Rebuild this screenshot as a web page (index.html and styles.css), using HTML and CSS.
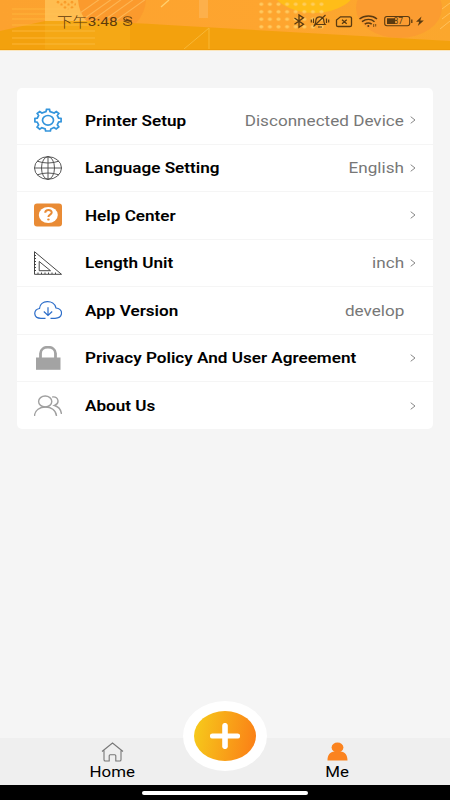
FILE: index.html
```
<!DOCTYPE html>
<html lang="en">
<head>
  <meta charset="UTF-8" />
  <meta name="viewport" content="width=device-width, initial-scale=1.0"/>
  <title>Me</title>
  <link rel="stylesheet" href="styles.css">
</head>
<body>
  <div class="app">
    <header class="header">
      <svg class="header-bg" width="450" height="51" viewBox="0 0 450 51">
        <defs>
          <linearGradient id="sky" x1="0" x2="1">
            <stop offset="0" stop-color="#fca22f"/>
            <stop offset="0.6" stop-color="#fea52f"/>
            <stop offset="1" stop-color="#fba72d"/>
          </linearGradient>
          <pattern id="dots" width="8.6" height="7.5" patternUnits="userSpaceOnUse" x="257" y="0.5">
            <ellipse cx="4.3" cy="3.8" rx="2.1" ry="1.6" fill="#ffd069"/>
          </pattern>
          <pattern id="smallDots" width="7" height="5.5" patternUnits="userSpaceOnUse">
            <circle cx="2" cy="2" r="1.4" fill="#f99a28"/>
            <circle cx="5.5" cy="4.5" r="1.2" fill="#f99a28"/>
          </pattern>
          <clipPath id="leftBall"><circle cx="112" cy="-2" r="35"/></clipPath>
        </defs>
        <rect width="450" height="51" fill="url(#sky)"/>
        <rect x="45" width="45" height="25" fill="#ffbd50"/>
        <path d="M53 0h24l-2 8-10 2z" fill="url(#smallDots)"/>
        <ellipse cx="112" cy="-2" rx="34" ry="35" fill="#fb9a2d"/>
        <g clip-path="url(#leftBall)" stroke="#fdb552" stroke-width="1.1">
          <path d="M80 13L100-1M85 18L112-1M90 22L122-1M96 26L134-1M104 29L146-1"/>
        </g>
        <path d="M161 7l8-7" stroke="#ffd06e" stroke-width="1.3"/>
        <rect x="199" width="9" height="18" fill="#fdb04b"/>
        <ellipse cx="314" cy="-14" rx="43" ry="27" fill="#ffbd18"/>
        <ellipse cx="399" cy="8" rx="43" ry="30" fill="#fb9c31"/>
        <rect x="257" y="1" width="69" height="28" fill="url(#dots)" opacity="0.85"/>
        <path d="M442 9l8-6M442 19l8-6M440 29l10-8" stroke="#ffc15c"/>
        <path d="M0 31L45 21H90C120 22 150 24 185 26L450 41V51H0z" fill="#f3a10d"/>
        <rect x="45" y="21" width="85" height="29" fill="#f7ad1b" opacity="0.6"/>
        <path d="M12 9h33M12 14h33M12 19h33M12 25h33M12 31h33M12 38h33M12 44h33" stroke="#ffb83c" stroke-width="1.6" opacity="0.6"/>
        <path d="M45 9h32M45 14h34M45 19h37M45 25h50M45 31h50M45 38h50M45 44h50" stroke="#ffc85b" stroke-width="1.4" opacity="0.35"/>
        <path d="M184 49l25-21v22" fill="none" stroke="#f8b837"/>
        <rect y="49" width="450" height="1" fill="#ed9a09"/>
        <rect y="50" width="450" height="1" fill="#fbe6bd"/>
      </svg>
      <div class="status">
        <div class="clock"><span class="cjk">下午</span><span>3:48</span>
          <svg width="10" height="12" viewBox="0 0 10 12" fill="none" stroke="#6b430f" stroke-width="1.1"><path d="M8.800 3.300C8 .4 1.300.4 1.200 3.400c0 3 7.600 1.800 7.600 4.900 0 3.600-7.300 3.400-7.800 0M3.200 3.800l5.600 2.400M1 6l5.800 2.400"/></svg>
        </div>
        <svg width="134" height="18" viewBox="292 12 134 18" fill="none" stroke="#5a3a10" stroke-width="1.3">
          <path d="M294.500 18l9 6.300-4.500 2.900V15l4.500 2.900-9 6.400"/>
          <path d="M314.800 24.500c1.200-1.500.8-3 1.200-5 .8-3.500 6.500-3.500 7.600 0 .5 2 0 3.500 1.500 5zM318 27h4M325.500 15l-12 11.500M313.500 18.500v4.500M326.500 18.500v4.500M311.300 19.500v3M328.700 19.500v3" stroke-width="1.200"/>
          <path d="M340.500 16.800h9.500q1.500 0 1.500 1.300v7.200q0 1.200-1.500 1.200h-12q-1.500 0-1.500-1.200V20zM342 19.700l4.700 4M346.700 19.700l-4.700 4"/>
          <path d="M359.500 19c5-4 13-4 17.500 0M362 21.700c4-3 9-3 12.500 0M364.700 24.200c2.300-1.600 5-1.600 7 0" stroke-width="1.500"/>
          <circle cx="368.300" cy="26" r="1" fill="#5a3a10" stroke="none"/>
          <path d="M373.700 24v3M375.700 24v2.500" stroke-width=".8"/>
          <rect x="384.700" y="16.500" width="25" height="9.300" rx="2.200" stroke-width="1.100"/>
          <rect x="387" y="18.300" width="8" height="5.700" fill="#5a3a10" stroke="none"/>
          <path d="M411.800 19.500v3.500"/>
          <path d="M421.500 16.500l-5.500 5.200h3.200l-1.400 4.300 6-5.500h-3.500z" fill="#5a3a10" stroke="none"/>
          <text class="battery" x="393.500" y="24">87</text>
        </svg>
      </div>
    </header>

    <main class="content">
      <ul class="card">
        <li class="row">
          <svg class="icon" viewBox="0 0 28 24" fill="none" stroke="#3495dc" stroke-width="1.700">
            <path d="M12 3.500L12.500 1.300h3L16 3.500l4.200 1.500L22.300 3.500 24.800 5.500 23.300 7.500l1.300 2.600 2.500.3v3.300l-2.500.3-1.300 2.800 1.500 2-2.600 2.100-2.200-1.400L16.800 21l-.4 2h-4.800L11.200 21l-3.400-1.300-2.100 1.400-2.600-2.100 1.500-2L3.300 14.200l-2.400-.4v-3.400l2.400-.3L4.600 7.500 3.200 5.500l2.500-2L7.900 5z"/>
            <ellipse cx="14" cy="12.300" rx="5.500" ry="4.800"/>
          </svg>
          <span class="label">Printer Setup</span>
          <span class="value">Disconnected Device</span>
          <svg class="arrow" viewBox="0 0 6 8"><path d="M.7.700L5 4 .7 7.300"/></svg>
        </li>
        <li class="row">
          <svg class="icon" viewBox="0 0 28 24" fill="none" stroke="#454545" stroke-width=".9">
            <ellipse cx="14" cy="12" rx="13.500" ry="11.300"/>
            <ellipse cx="14" cy="12" rx="6.500" ry="11.300"/>
            <path d="M14 .5v23M.5 12h27M3.200 5.200q10.800 3.600 21.600 0M3.200 18.800q10.800-3.600 21.600 0"/>
          </svg>
          <span class="label">Language Setting</span>
          <span class="value">English</span>
          <svg class="arrow" viewBox="0 0 6 8"><path d="M.7.700L5 4 .7 7.300"/></svg>
        </li>
        <li class="row">
          <svg class="icon" viewBox="0 0 28 24">
            <rect y=".5" width="28" height="23" rx="3" fill="#e98b35"/>
            <ellipse cx="14.300" cy="12" rx="9.500" ry="8" fill="#fff"/>
            <path d="M11.200 9.800c.2-3.600 6.500-3.500 6.500-.3 0 2.200-3.300 1.900-3.300 4.400" fill="none" stroke="#e98b35" stroke-width="2"/>
            <ellipse cx="14.400" cy="16.500" rx="1.300" ry="1.100" fill="#e98b35"/>
          </svg>
          <span class="label">Help Center</span>
          <svg class="arrow" viewBox="0 0 6 8"><path d="M.7.700L5 4 .7 7.300"/></svg>
        </li>
        <li class="row">
          <svg class="icon" viewBox="0 0 28 24" fill="none" stroke="#333" stroke-width=".9">
            <path d="M.5.700V23.300H27.500z"/>
            <path d="M5.200 10.500v9.200H16.500z"/>
            <path d="M.5 4.500h1.500M.5 7.500h1.500M.5 10.500h1.500M.5 13.500h1.500M.5 16.500h1.500M.5 19.500h1.500M4 23v-1.500M7.500 23v-1.500M11 23v-1.500M14.500 23v-1.500M18 23v-1.500M21.500 23v-1.500"/>
          </svg>
          <span class="label">Length Unit</span>
          <span class="value">inch</span>
          <svg class="arrow" viewBox="0 0 6 8"><path d="M.7.700L5 4 .7 7.300"/></svg>
        </li>
        <li class="row">
          <svg class="icon" viewBox="0 0 28 24" fill="none" stroke="#2c6dc9" stroke-width="1.200">
            <path d="M11.500 20.300H7C-1 20.300-1 11.800 5.500 10.500 6 1.800 20 1.100 22 10c8 1.300 7 10.300-1 10.300h-4.500M14 9.300v8.200M9.800 13.500l4.200 4 4.200-4"/>
          </svg>
          <span class="label">App Version</span>
          <span class="value">develop</span>
          <span class="arrow"></span>
        </li>
        <li class="row">
          <svg class="icon" viewBox="0 0 28 24">
            <path d="M6.500 12V7.500C6.500-.9 21.500-.9 21.500 7.500V12" fill="none" stroke="#a3a3a3" stroke-width="2.800"/>
            <rect x="2" y="11.500" width="24.500" height="12.300" fill="#a3a3a3"/>
          </svg>
          <span class="label">Privacy Policy And User Agreement</span>
          <svg class="arrow" viewBox="0 0 6 8"><path d="M.7.700L5 4 .7 7.300"/></svg>
        </li>
        <li class="row">
          <svg class="icon" viewBox="0 0 28 24" fill="none" stroke="#a0a0a0" stroke-width="1.400">
            <ellipse cx="11.200" cy="7.500" rx="6.600" ry="5.500"/>
            <path d="M.5 22c.5-12 21.300-12 22 0M18.200 3c6.500-.8 7.800 6.500 2.300 8.500 4 1.200 6.500 4 7 8.500"/>
          </svg>
          <span class="label">About Us</span>
          <svg class="arrow" viewBox="0 0 6 8"><path d="M.7.700L5 4 .7 7.300"/></svg>
        </li>
      </ul>
    </main>

    <nav class="tabs">
      <div class="tab">
        <svg width="23" height="20" viewBox="0 0 23 20" fill="none" stroke="#777" stroke-width="1.100">
          <path d="M1 9.500L11.500 1 22 9.500M3 8.500v9.200q0 1.300 1.300 1.300h3.900v-5.200q0-1 1-1h4.600q1 0 1 1V19h4q1.200 0 1.200-1.300V8.500"/>
        </svg>
        <span class="tab-text">Home</span>
      </div>
      <div class="add">
        <div class="add-inner">
          <svg width="30" height="26" viewBox="0 0 30 26"><path d="M15 2.700v20.600" stroke="#fff" stroke-width="5.600" stroke-linecap="round"/><path d="M2.300 13h25.400" stroke="#fff" stroke-width="4.800" stroke-linecap="round"/></svg>
        </div>
      </div>
      <div class="tab">
        <svg width="21" height="20" viewBox="0 0 21 20" fill="#fb831f">
          <ellipse cx="10.500" cy="5.500" rx="5.900" ry="5"/>
          <path d="M7.500 8h6v1.500c4.500.5 7 3 7 9H.5c0-6 2.500-8.500 7-9z"/>
        </svg>
        <span class="tab-text">Me</span>
      </div>
    </nav>
    <div class="gesture"><div class="pill"></div></div>
  </div>
</body>
</html>
```
FILE: styles.css
```
* {
  box-sizing: border-box;
}
body {
  margin: 0;
  font-family: Roboto, "Noto Sans CJK SC", sans-serif;
  background: #f5f5f5;
}
svg {
  display: block;
}
.app {
  width: 450px;
  height: 800px;
  display: flex;
  flex-direction: column;
  overflow: hidden;
}
.header {
  height: 51px;
  position: relative;
}
.header-bg {
  position: absolute;
  top: 0;
  left: 0;
}
.status {
  position: relative;
  display: flex;
  justify-content: space-between;
  align-items: center;
  padding: 12px 24px 0 57px;
}
.clock {
  display: flex;
  align-items: center;
  height: 18px;
  color: #5f3b0b;
  font-size: 13.2px;
  transform: scaleX(1.17);
  transform-origin: left;
}
.clock svg {
  width: 9px;
  height: 12px;
  margin-left: 4px;
}
.cjk {
  font-family: "Noto Sans CJK SC", sans-serif;
  font-weight: 300;
}
.battery {
  font-size: 8.5px;
  fill: #5a3a10;
  stroke: none;
}
.content {
  flex: 1;
  padding: 37px 17px 0;
}
.card {
  margin: 0;
  padding: 9px 0 0;
  list-style: none;
  background: #fff;
  border-radius: 5px;
}
.row {
  display: flex;
  align-items: center;
  height: 47.5px;
  padding: 0 17px;
  border-bottom: 1px solid #f5f5f5;
}
.row:last-child {
  height: 47px;
}
.icon {
  width: 28px;
  height: 24px;
  flex: none;
  margin-right: 23px;
}
/* wide lettering */
.label {
  padding-top: 2px;
  font-size: 14.5px;
  font-weight: 600;
  color: #000;
  white-space: nowrap;
  transform: scaleX(1.18);
  transform-origin: left;
}
.value {
  margin-left: auto;
  padding-top: 2px;
  font-size: 14.5px;
  color: #777;
  white-space: nowrap;
  transform: scaleX(1.18);
  transform-origin: right;
}
.arrow {
  width: 6px;
  height: 8px;
  flex: none;
  margin-left: 6px;
  fill: none;
  stroke: #888;
  stroke-width: 1;
}
.label + .arrow {
  margin-left: auto;
}
.row:last-child {
  border-bottom: none;
}
.tabs {
  height: 47px;
  display: flex;
  background: #efefef;
}
.tab {
  flex: 1;
  display: flex;
  flex-direction: column;
  align-items: center;
  padding-top: 4px;
}
.tab-text {
  font-size: 14.3px;
  line-height: 20px;
  color: #000;
  transform: scaleX(1.18);
}
.add {
  width: 84px;
  height: 70px;
  flex: none;
  margin: -37px -42px 0;
  display: flex;
  align-items: center;
  justify-content: center;
  background: #fff;
  border-radius: 50%;
}
.add-inner {
  width: 62px;
  height: 50px;
  display: flex;
  align-items: center;
  justify-content: center;
  border-radius: 50%;
  background: linear-gradient(100deg, #f6cd1b, #fb7c16);
}
.gesture {
  height: 15px;
  padding-top: 6px;
  background: #000;
}
.pill {
  width: 166px;
  height: 4px;
  margin: 0 auto;
  border-radius: 2px;
  background: #fff;
}
```
